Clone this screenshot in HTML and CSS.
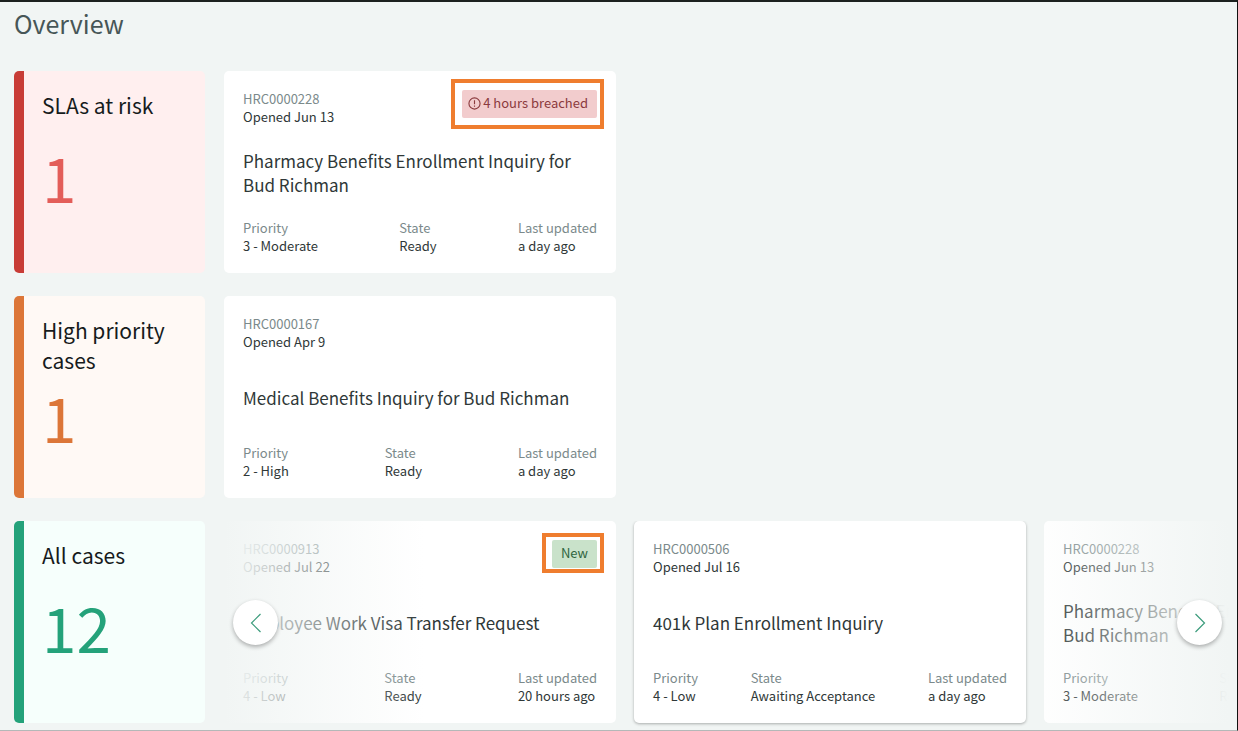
FILE: index.html
```
<!DOCTYPE html>
<html lang="en">
<head>
  <meta charset="UTF-8">
  <meta name="viewport" content="width=device-width, initial-scale=1.0">
  <title>Overview</title>
  <link rel="stylesheet" href="styles.css">
</head>
<body>
  <main class="overview">
    <h1 class="page-title">Overview</h1>

    <section class="row">
      <div class="tile tile-risk">
        <h2 class="tile-title">SLAs at risk</h2>
        <div class="tile-count">1</div>
      </div>
      <div class="cards">
        <article class="card">
          <div class="card-top">
            <div>
              <div class="label">HRC0000228</div>
              <div class="value">Opened Jun 13</div>
            </div>
            <div class="badge badge-breached">
              <svg class="badge-icon" width="13" height="13" viewBox="0 0 14 14" fill="none" stroke="currentColor" stroke-width="1.2">
                <circle cx="7" cy="7" r="6"/>
                <path d="M7 3.6v4.2M7 9.1v1.4"/>
              </svg>
              4 hours breached
            </div>
          </div>
          <h3 class="card-title">Pharmacy Benefits Enrollment Inquiry for Bud Richman</h3>
          <div class="meta">
            <div><div class="label">Priority</div><div class="value">3 - Moderate</div></div>
            <div><div class="label">State</div><div class="value">Ready</div></div>
            <div><div class="label">Last updated</div><div class="value">a day ago</div></div>
          </div>
        </article>
      </div>
    </section>

    <section class="row">
      <div class="tile tile-high">
        <h2 class="tile-title">High priority cases</h2>
        <div class="tile-count">1</div>
      </div>
      <div class="cards">
        <article class="card">
          <div class="card-top">
            <div>
              <div class="label">HRC0000167</div>
              <div class="value">Opened Apr 9</div>
            </div>
          </div>
          <h3 class="card-title">Medical Benefits Inquiry for Bud Richman</h3>
          <div class="meta">
            <div><div class="label">Priority</div><div class="value">2 - High</div></div>
            <div><div class="label">State</div><div class="value">Ready</div></div>
            <div><div class="label">Last updated</div><div class="value">a day ago</div></div>
          </div>
        </article>
      </div>
    </section>

    <section class="row">
      <div class="tile tile-all">
        <h2 class="tile-title">All cases</h2>
        <div class="tile-count">12</div>
      </div>
      <div class="carousel">
        <div class="cards">
          <article class="card">
            <div class="card-top">
              <div>
                <div class="label">HRC0000913</div>
                <div class="value">Opened Jul 22</div>
              </div>
              <div class="badge badge-new">New</div>
            </div>
            <h3 class="card-title">Employee Work Visa Transfer Request</h3>
            <div class="meta">
              <div><div class="label">Priority</div><div class="value">4 - Low</div></div>
              <div><div class="label">State</div><div class="value">Ready</div></div>
              <div><div class="label">Last updated</div><div class="value">20 hours ago</div></div>
            </div>
          </article>
          <article class="card card-active">
            <div class="card-top">
              <div>
                <div class="label">HRC0000506</div>
                <div class="value">Opened Jul 16</div>
              </div>
            </div>
            <h3 class="card-title">401k Plan Enrollment Inquiry</h3>
            <div class="meta">
              <div><div class="label">Priority</div><div class="value">4 - Low</div></div>
              <div><div class="label">State</div><div class="value">Awaiting Acceptance</div></div>
              <div><div class="label">Last updated</div><div class="value">a day ago</div></div>
            </div>
          </article>
          <article class="card">
            <div class="card-top">
              <div>
                <div class="label">HRC0000228</div>
                <div class="value">Opened Jun 13</div>
              </div>
            </div>
            <h3 class="card-title">Pharmacy Benefits Enrollment Inquiry for Bud Richman</h3>
            <div class="meta">
              <div><div class="label">Priority</div><div class="value">3 - Moderate</div></div>
              <div><div class="label">State</div><div class="value">Ready</div></div>
              <div><div class="label">Last updated</div><div class="value">a day ago</div></div>
            </div>
          </article>
        </div>
        <div class="fade fade-left"></div>
        <div class="fade fade-right"></div>
        <button class="arrow-btn arrow-prev" type="button" aria-label="Previous">
          <svg width="12" height="20" viewBox="0 0 12 20" fill="none" stroke="currentColor" stroke-width="1.2"><path d="M10.500 1L1.500 10l9 9"/></svg>
        </button>
        <button class="arrow-btn arrow-next" type="button" aria-label="Next">
          <svg width="12" height="20" viewBox="0 0 12 20" fill="none" stroke="currentColor" stroke-width="1.2"><path d="M1.500 1l9 9-9 9"/></svg>
        </button>
      </div>
    </section>
  </main>
</body>
</html>
```
FILE: styles.css
```
* {
  box-sizing: border-box;
}
body {
  margin: 0;
  font-family: "Noto Sans CJK SC", "Open Sans", sans-serif;
  font-size: 13px;
  line-height: 18px;
  color: #2f3838;
  background-color: #f1f5f4;
}
h1, h2, h3 {
  margin: 0;
  font-weight: 400;
}
.overview {
  display: flex;
  flex-direction: column;
  gap: 23px;
  min-height: 100vh;
  padding: 6px 8px 7px 14px;
  border-top: 2px solid #1c211f;
  border-right: 1px solid #111;
  border-bottom: 1px solid #b4b8b8;
}
.page-title {
  font-size: 25px;
  line-height: 30px;
  margin-bottom: 10px;
  color: #475657;
}
.row {
  display: flex;
  gap: 19px;
}

/* summary tiles */
.tile {
  display: flex;
  flex-direction: column;
  flex: 0 0 191px;
  min-height: 202px;
  padding: 19px 18px 41px;
  border-left: 10px solid;
  border-radius: 5px;
}
.tile-title {
  font-size: 21px;
  line-height: 30px;
  color: #161b1c;
}
.tile-count {
  display: flex;
  flex: 1;
  align-items: center;
  font-size: 62px;
  line-height: 60px;
}
.tile-risk {
  background-color: #ffefef;
  border-color: #c83c36;
}
.tile-risk .tile-count {
  color: #e35d59;
}
.tile-high {
  background-color: #fff9f5;
  border-color: #dc7638;
}
.tile-high .tile-count {
  color: #dc7638;
}
.tile-all {
  background-color: #f6fffc;
  border-color: #24a27a;
}
.tile-all .tile-count {
  color: #24a27a;
}

/* case cards */
.cards {
  display: flex;
  gap: 18px;
}
.card {
  display: flex;
  flex-direction: column;
  justify-content: space-between;
  flex: 0 0 392px;
  min-height: 202px;
  padding: 19px 19px 18px;
  background-color: #fff;
  border-radius: 5px;
}
.card-active {
  box-shadow: 0 1px 3px rgba(0, 0, 0, 0.3);
}
.card-top {
  display: flex;
  justify-content: space-between;
  align-items: flex-start;
}
.card-title {
  font-size: 17px;
  line-height: 24px;
}
.label {
  color: #7b8a8b;
}
.meta {
  display: flex;
  justify-content: space-between;
}

.badge {
  position: relative;
  display: flex;
  align-items: center;
  gap: 2px;
  height: 28px;
  padding: 0 9px 2px;
  border-radius: 2px;
}
.badge::after {
  content: "";
  position: absolute;
  inset: -11px -7px -11px -11px;
  border: 4px solid #ef7d2e;
}
.badge-breached {
  padding-left: 6px;
  background-color: #f2cccd;
  color: #8b3a3d;
}
.badge-new {
  background-color: #c9e2ca;
  color: #2f6540;
}
.badge-new::after {
  inset: -7px -7px -5px -10px;
}

/* carousel */
.carousel {
  position: relative;
  flex: 1;
  min-width: 0;
}
.carousel .cards {
  overflow: hidden;
  padding-bottom: 6px;
  margin-bottom: -6px;
}
.fade {
  position: absolute;
  top: 0;
  bottom: 0;
  width: 200px;
  pointer-events: none;
}
.fade-left {
  left: 0;
  background: linear-gradient(to right, #f1f5f4, rgba(241, 245, 244, 0));
}
.fade-right {
  right: 0;
  background: linear-gradient(to left, #f1f5f4, rgba(241, 245, 244, 0));
}
.arrow-btn {
  position: absolute;
  top: 50%;
  display: flex;
  align-items: center;
  justify-content: center;
  width: 45px;
  height: 45px;
  margin-top: -22px;
  padding: 0;
  background-color: #fff;
  color: #3c9c7c;
  border: none;
  border-radius: 50%;
  box-shadow: 0 2px 4px rgba(0, 0, 0, 0.3);
  cursor: pointer;
}
.arrow-prev {
  left: 9px;
}
.arrow-next {
  right: 7px;
}
```
